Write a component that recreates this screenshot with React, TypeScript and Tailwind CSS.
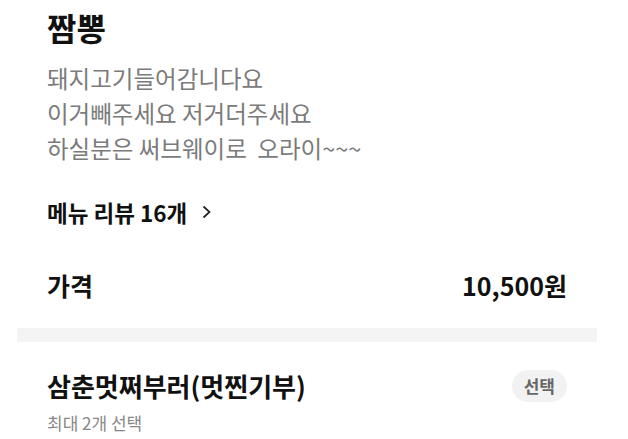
export default function App() {
  return (
    <div className="min-h-screen bg-white font-['Noto_Sans_CJK_KR','Noto_Sans',sans-serif] text-[#111]">
      <div className="mx-[17px] w-[580px]">
        <div className="px-[30px]">
          <h1 className="text-[32px] font-bold leading-[40px] pt-[7px]">짬뽕</h1>
          <p className="mt-[14px] text-[23.5px] leading-[35px] text-[#7b7b7b]">
            돼지고기들어감니다요
            <br />
            이거빼주세요 저거더주세요
            <br />
            하실분은 써브웨이로&nbsp; 오라이~~~
          </p>
          <button className="mt-[32px] flex items-center gap-[15px] text-[22.5px] font-bold leading-[28px]">
            메뉴 리뷰 16개
            <svg width="9" height="14" viewBox="0 0 9 14" fill="none" stroke="#222" strokeWidth="1.7">
              <path d="M1.5 1.5l6 5.5-6 5.5" />
            </svg>
          </button>
          <div className="mt-[42px] flex items-center justify-between text-[25px] font-bold leading-[34px]">
            <span>가격</span>
            <span>10,500원</span>
          </div>
        </div>
        <div className="mt-[26px] h-[14px] bg-[#f4f4f5]" />
        <div className="px-[30px] pt-[26px]">
          <div className="flex items-center justify-between">
            <h2 className="text-[26px] font-bold leading-[36px]">삼춘멋쩌부러(멋찐기부)</h2>
            <span className="rounded-full bg-[#f2f2f3] px-[12px] py-[5px] text-[17px] font-bold leading-[22px] text-[#666]">
              선택
            </span>
          </div>
          <p className="mt-[7px] text-[17px] leading-[24px] text-[#888]">최대 2개 선택</p>
        </div>
      </div>
    </div>
  );
}
